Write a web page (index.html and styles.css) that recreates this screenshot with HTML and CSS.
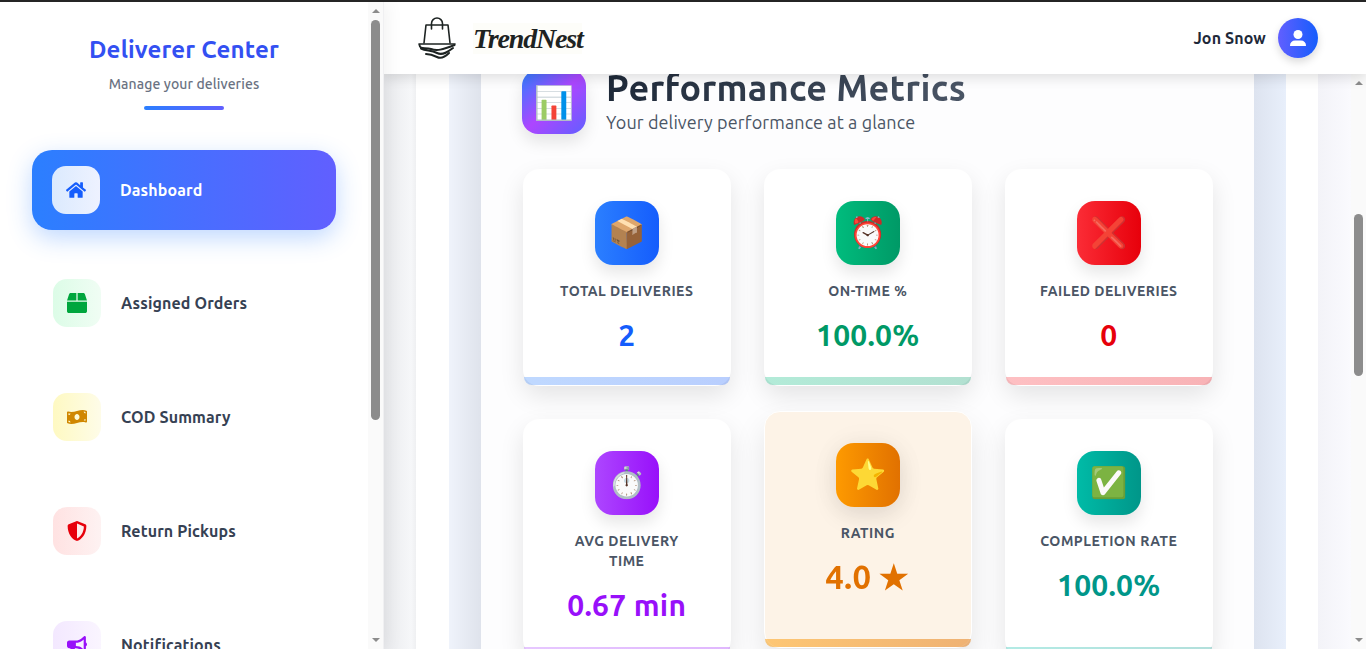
FILE: index.html
```html
<!DOCTYPE html>
<html lang="en">
<head>
<meta charset="utf-8">
<title>Deliverer Center</title>
<link rel="stylesheet" href="styles.css">
</head>
<body>
<div class="app">
  <aside class="sidebar">
    <div class="side-content">
      <div class="brand">
        <h1 class="brand-title">Deliverer Center</h1>
        <p class="brand-sub">Manage your deliveries</p>
        <div class="brand-line"></div>
      </div>
      <nav class="nav">
        <a class="nav-item active"><span class="nav-icon i-blue"><svg class="fa" viewBox="0 0 576 512"><path d="M280.37 148.26L96 300.11V464a16 16 0 0 0 16 16l112.06-.29a16 16 0 0 0 15.92-16V368a16 16 0 0 1 16-16h64a16 16 0 0 1 16 16v95.64a16 16 0 0 0 16 16.05L464 480a16 16 0 0 0 16-16V300L295.67 148.26a12.19 12.19 0 0 0-15.3 0zM571.6 251.47L488 182.56V44.05a12 12 0 0 0-12-12h-56a12 12 0 0 0-12 12v72.61L318.47 43a48 48 0 0 0-61 0L4.34 251.47a12 12 0 0 0-1.6 16.9l25.5 31A12 12 0 0 0 45.15 301l235.22-193.74a12.19 12.19 0 0 1 15.3 0L530.9 301a12 12 0 0 0 16.9-1.6l25.5-31a12 12 0 0 0-1.7-16.93z"/></svg></span><span>Dashboard</span></a>
        <a class="nav-item"><span class="nav-icon i-green"><svg class="fa" viewBox="0 0 512 512"><path d="M509.5 184.6L458.9 32.8C452.4 13.2 434.1 0 413.4 0H272v192h238.7c-.4-2.5-.4-5-1.2-7.4zM240 0H98.6c-20.7 0-39 13.2-45.5 32.8L2.5 184.6c-.8 2.4-.8 4.9-1.2 7.4H240V0zM0 224v240c0 26.5 21.5 48 48 48h416c26.5 0 48-21.5 48-48V224H0z"/></svg></span><span>Assigned Orders</span></a>
        <a class="nav-item"><span class="nav-icon i-yellow"><svg class="fa" viewBox="0 0 640 512"><path d="M621.16 54.46C582.37 38.19 543.55 32 504.75 32c-123.17-.01-246.33 62.34-369.5 62.34-30.89 0-61.76-3.92-92.65-13.72-3.47-1.1-6.95-1.62-10.35-1.62C15.04 79 0 92.32 0 110.81v317.26c0 12.63 7.23 24.6 18.84 29.46C57.63 473.81 96.45 480 135.25 480c123.17 0 246.34-62.35 369.51-62.35 30.89 0 61.76 3.92 92.65 13.72 3.47 1.1 6.95 1.62 10.35 1.62 17.21 0 32.25-13.32 32.25-31.81V83.93c-.01-12.64-7.24-24.6-18.85-29.47zM48 132.22c20.12 5.04 41.12 7.57 62.72 8.93C104.84 170.54 79 192.69 48 192.69v-60.47zm0 285v-47.78c34.37 0 62.18 27.27 63.71 61.4-22.53-1.81-43.59-6.31-63.71-13.62zM320 352c-44.19 0-80-42.99-80-96 0-53.02 35.82-96 80-96s80 42.98 80 96c0 53.03-35.83 96-80 96zm272 27.78c-17.52-4.39-35.71-6.85-54.32-8.44 5.87-26.08 27.5-45.88 54.32-49.28v57.72zm0-236.11c-30.89-3.91-54.86-29.7-55.81-61.55 19.54 2.17 38.09 6.23 55.81 12.66v48.89z"/></svg></span><span>COD Summary</span></a>
        <a class="nav-item"><span class="nav-icon i-red"><svg class="fa" viewBox="0 0 512 512"><path d="M466.5 83.7l-192-80a48.15 48.15 0 0 0-36.9 0l-192 80C27.7 91.1 16 108.6 16 128c0 198.5 114.5 335.7 221.5 380.3 11.8 4.9 25.1 4.9 36.9 0C360.1 472.6 496 349.3 496 128c0-19.4-11.7-36.9-29.5-44.3zM256.1 446.3l-.1-381 175.9 73.3c-3.3 151.4-82.1 261.1-175.8 307.7z"/></svg></span><span>Return Pickups</span></a>
        <a class="nav-item"><span class="nav-icon i-purple"><svg class="fa" viewBox="0 0 576 512"><path d="M576 240c0-23.63-12.95-44.04-32-55.12V32.01C544 23.26 537.02 0 512 0c-7.12 0-14.19 2.38-19.98 7.02l-85.03 68.03C364.28 109.19 310.66 128 256 128H64c-35.35 0-64 28.65-64 64v96c0 35.35 28.65 64 64 64h33.7c-1.39 10.48-2.18 21.14-2.18 32 0 39.77 9.26 77.35 25.56 110.94 5.19 10.69 16.52 17.06 28.4 17.06h74.28c26.05 0 41.69-29.84 25.9-50.56-16.4-21.52-26.15-48.36-26.15-77.44 0-11.11 1.62-21.79 4.41-32H256c54.66 0 108.28 18.81 150.98 52.95l85.03 68.03a32.023 32.023 0 0 0 19.98 7.02c24.92 0 32-22.78 32-32V295.13C563.05 284.04 576 263.63 576 240zm-96 141.42l-33.05-26.44C392.95 311.78 325.12 288 256 288v-96c69.12 0 136.95-23.78 190.95-66.98L480 98.58v282.84z"/></svg></span><span>Notifications</span></a>
      </nav>
    </div>
    <div class="scrollbar">
      <span class="arrow-up"></span>
      <div class="track"><div class="thumb thumb-side"></div></div>
      <span class="arrow-down"></span>
    </div>
  </aside>
  <div class="right">
    <header class="topbar">
      <div class="logo">
        <svg class="logo-bag" viewBox="0 0 38 42" fill="none" stroke="#1d2322" stroke-width="1.6" stroke-linecap="round" stroke-linejoin="round">
          <path d="M6 26 8 8H30L32 26"/>
          <path d="M13.500 12V6.500a5.500 5.500 0 0 1 11 0V12"/>
          <path d="M1 27H37"/>
          <path d="M1.500 28C2 33 7 30 13 32S24 33 36.500 28" stroke-width="2"/>
          <path d="M3 31.500C8 34 13 33 19 36S31 34 35 31" stroke-width="2"/>
          <path d="M8 37C12 37 15 38 19 40S28 39 31 36" stroke-width="2"/>
        </svg>
        <span class="logo-text">TrendNest</span>
      </div>
      <div class="user">
        <span class="user-name">Jon Snow</span>
        <span class="avatar"><svg class="fa" viewBox="0 0 16 16"><circle cx="8" cy="4.500" r="4.500"/><path d="M5 10.500h6a5 5 0 0 1 5 5 .5.5 0 0 1-.5.5H.5a.5.5 0 0 1-.5-.5 5 5 0 0 1 5-5z"/></svg></span>
      </div>
    </header>
    <div class="main">
      <main class="main-view">
        <div class="layer-white">
          <div class="layer-blue">
            <section class="panel">
              <div class="panel-head">
                <span class="panel-icon">📊</span>
                <div class="panel-text">
                  <h2 class="panel-title">Performance Metrics</h2>
                  <p class="panel-sub">Your delivery performance at a glance</p>
                </div>
              </div>
              <div class="grid">
                <article class="card c-blue"><span class="card-icon">📦</span><h3 class="card-label">Total Deliveries</h3><p class="card-value">2</p></article>
                <article class="card c-green"><span class="card-icon">⏰</span><h3 class="card-label">On-Time %</h3><p class="card-value">100.0%</p></article>
                <article class="card c-red"><span class="card-icon">❌</span><h3 class="card-label">Failed Deliveries</h3><p class="card-value">0</p></article>
                <article class="card c-purple"><span class="card-icon">⏱️</span><h3 class="card-label">Avg Delivery Time</h3><p class="card-value">0.67 min</p></article>
                <article class="card c-amber lifted"><span class="card-icon">⭐</span><h3 class="card-label">Rating</h3><p class="card-value">4.0 ★</p></article>
                <article class="card c-teal"><span class="card-icon">✅</span><h3 class="card-label">Completion Rate</h3><p class="card-value">100.0%</p></article>
              </div>
            </section>
          </div>
        </div>
      </main>
      <div class="scrollbar">
        <span class="arrow-up"></span>
        <div class="track"><div class="thumb thumb-main"></div></div>
        <span class="arrow-down"></span>
      </div>
    </div>
  </div>
</div>
</body>
</html>
```
FILE: styles.css
```css
* { box-sizing: border-box; }
html, body { margin: 0; height: 100%; overflow: hidden; }
body {
  font-family: "Ubuntu", "Noto Sans", "Noto Color Emoji", sans-serif;
  background: #fff;
  color: #1e2939;
}
h1, h2, h3, p { margin: 0; }
.app {
  display: flex;
  height: 649px;
  border-top: 2px solid #262626;
}

/* sidebar */
.sidebar {
  width: 384px;
  flex: none;
  display: flex;
  background: #fff;
  border-right: 1px solid #f0f0f2;
  box-shadow: 4px 0 16px rgba(0, 0, 0, .05);
  position: relative;
  z-index: 3;
  overflow: hidden;
}
.side-content { flex: 1; min-width: 0; overflow: hidden; }
.brand { text-align: center; padding-top: 32px; }
.brand-title { font-size: 24px; line-height: 32px; font-weight: 700; color: #3350f2; letter-spacing: .008em; }
.brand-sub { font-size: 14px; line-height: 20px; font-weight: 500; color: #6a7282; margin-top: 8px; letter-spacing: .008em; }
.brand-line {
  width: 80px; height: 4px; border-radius: 2px; margin: 12px auto 0;
  background: linear-gradient(90deg, #2b7fff, #615fff);
}
.nav { display: flex; flex-direction: column; gap: 34px; padding: 39px 0 0 33px; }
.nav-item {
  display: flex; align-items: center; gap: 20px;
  height: 80px; width: 304px; flex: none;
  padding-left: 20px;
  border-radius: 20px;
  font-size: 16px; font-weight: 700; color: #364153;
  letter-spacing: .008em;
}
.nav-item.active {
  transform: translate(-1px, 1px);
  color: #fff;
  background: linear-gradient(90deg, #2b7fff, #615fff);
  box-shadow: 0 8px 25px rgba(43, 127, 255, .3);
}
.nav-icon {
  width: 48px; height: 48px; flex: none; border-radius: 14px;
  display: flex; align-items: center; justify-content: center;
}
.fa { width: 20px; height: 20px; fill: currentColor; display: block; }
.i-blue { background: linear-gradient(90deg, #dbeafe, #eef2ff); color: #155dfc; }
.i-green { background: linear-gradient(90deg, #dcfce7, #f0fdf4); color: #00a63e; }
.i-yellow { background: linear-gradient(90deg, #fef9c2, #fefce8); color: #d08700; }
.i-red { background: linear-gradient(90deg, #ffe2e2, #fef2f2); color: #e7000b; }
.i-purple { background: linear-gradient(90deg, #f3e8ff, #faf5ff); color: #9810fa; }

/* scrollbars */
.scrollbar {
  width: 15px; flex: none;
  display: flex; flex-direction: column; align-items: center;
  background: #fafafa;
  padding: 7px 0 7px;
}
.arrow-up, .arrow-down { width: 0; height: 0; flex: none; border-left: 4.500px solid transparent; border-right: 4.500px solid transparent; }
.arrow-up { border-bottom: 4.500px solid #8c8c8c; }
.arrow-down { border-top: 4.500px solid #8c8c8c; }
.track { flex: 1; width: 9px; }
.thumb { width: 9px; background: #8c8c8c; border-radius: 5px; }
.thumb-side { height: 400px; margin-top: 7px; }
.thumb-main { height: 162px; margin-top: 129px; }

/* right column */
.right { flex: 1; min-width: 0; display: flex; flex-direction: column; }
.topbar {
  height: 72px; flex: none;
  display: flex; align-items: center; justify-content: space-between;
  padding: 0 48px 0 34px;
  background: #fff;
  box-shadow: 0 4px 12px rgba(0, 0, 0, .12);
  position: relative;
  z-index: 2;
}
.logo { display: flex; align-items: center; gap: 17px; }
.logo-bag { width: 38px; height: 42px; display: block; }
.logo-text {
  width: 109px; height: 31px;
  font-family: "Liberation Serif", serif;
  font-style: italic; font-weight: 700;
  font-size: 28px; line-height: 31px; letter-spacing: -1.2px;
  color: #1d2322;
  background: #fdfdf9;
  white-space: nowrap;
}
.user { display: flex; align-items: center; gap: 12px; }
.user-name { font-size: 16px; font-weight: 700; color: #1e2939; letter-spacing: .008em; }
.avatar {
  width: 40px; height: 40px; border-radius: 50%;
  background: linear-gradient(90deg, #615fff, #155dfc);
  color: #fff;
  display: flex; align-items: center; justify-content: center;
  box-shadow: 0 4px 8px rgba(0, 0, 0, .15);
}
.avatar .fa { width: 16px; height: 16px; }

.main { flex: 1; min-height: 0; display: flex; }
.main-view {
  flex: 1; min-width: 0; overflow: hidden;
  padding: 0 33px 0 32px;
  background: linear-gradient(90deg, #e9eaed, #f6f7f9 2.800%, #eff0f2 3.300%, #f3f3f8 96.600%, #fafafe);
}
.layer-white { background: #fff; padding: 0 32px 0 33px; height: 100%; }
.layer-blue {
  background: linear-gradient(90deg, #eff3fb, #dfe3ec 3.820%, #dde3ef 96.180%, #e8effb);
  padding: 0 32px;
  height: 100%;
}
.panel { background: #fdfdfe; height: 100%; padding: 0 41px 0 41px; overflow: hidden; }
.panel-head { display: flex; align-items: flex-start; gap: 20px; margin-top: -6px; }
.panel-icon {
  width: 64px; height: 64px; flex: none; border-radius: 16px;
  margin-top: 2px;
  background: linear-gradient(135deg, #2b7fff, #ad46ff 50%, #615fff);
  display: flex; align-items: center; justify-content: center;
  font-size: 32px; line-height: 1;
  box-shadow: 0 8px 16px rgba(0, 0, 0, .1);
}
.panel-title {
  font-size: 36px; line-height: 40px; font-weight: 700;
  letter-spacing: .008em;
  background: linear-gradient(90deg, #1e2939, #4a5565);
  -webkit-background-clip: text; background-clip: text; color: transparent;
  width: fit-content;
}
.panel-sub { font-size: 18px; line-height: 28px; color: #4a5565; letter-spacing: .006em; }
.grid {
  display: grid;
  grid-template-columns: repeat(3, 1fr);
  gap: 33px 32.500px;
  margin: 33px 0 0 .5px;
}
.card {
  position: relative;
  display: flex; flex-direction: column; align-items: center;
  padding: 31px 32px 29px;
  border: 1px solid rgba(255, 255, 255, .8);
  border-radius: 16px;
  background: #fff;
  text-align: center;
  box-shadow: 0 10px 25px rgba(0, 0, 0, .1);
}
.card::after {
  content: ""; position: absolute; left: 0; right: 0; bottom: 0; height: 8px;
  border-radius: 0 0 8px 8px;
  background: linear-gradient(90deg, var(--c1), var(--c2));
  opacity: .3;
}
.c-blue { --c1: #2b7fff; --c2: #155dfc; }
.c-green { --c1: #00bc7d; --c2: #009966; }
.c-red { --c1: #fb2c36; --c2: #e7000b; }
.c-purple { --c1: #ad46ff; --c2: #9810fa; }
.c-amber { --c1: #fe9a00; --c2: #e17100; }
.c-teal { --c1: #00bba7; --c2: #009689; }
.card-icon {
  width: 64px; height: 64px; flex: none; border-radius: 18px;
  background: linear-gradient(90deg, var(--c1), var(--c2));
  display: flex; align-items: center; justify-content: center;
  font-family: "Noto Color Emoji", sans-serif;
  font-size: 30px; line-height: 1;
  box-shadow: 0 8px 16px rgba(0, 0, 0, .1);
}
.card-label {
  margin-top: 16px;
  font-size: 14px; line-height: 20px; font-weight: 700;
  letter-spacing: .5px; text-transform: uppercase;
  color: #4a5565;
}
.card-value { margin-top: 13px; font-size: 30px; line-height: 42px; font-weight: 700; letter-spacing: .008em; color: var(--c2); white-space: nowrap; }
.lifted { transform: translateY(-8px); background: #fdf3e7; border-color: #fff; box-shadow: 0 16px 32px rgba(0, 0, 0, .1); }
.lifted::after { opacity: .5; }
.lifted .card-icon { box-shadow: 0 8px 24px rgba(0, 0, 0, .1), 0 0 32px rgba(0, 0, 0, .04); }
.lifted .card-value { transform: scale(1.1); }
```
